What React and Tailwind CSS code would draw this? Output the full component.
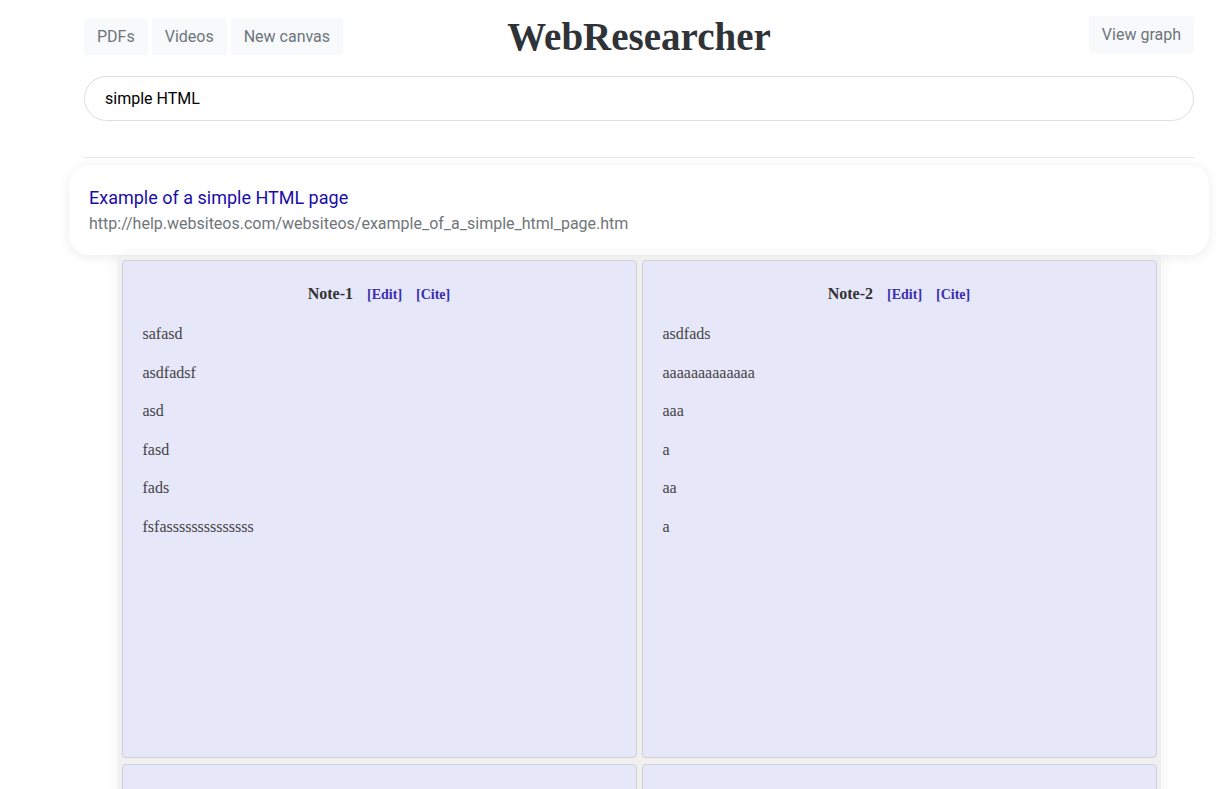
import React from 'react';

const notes = [
  { title: 'Note-1', lines: ['safasd', 'asdfadsf', 'asd', 'fasd', 'fads', 'fsfassssssssssssss'] },
  { title: 'Note-2', lines: ['asdfads', 'aaaaaaaaaaaaa', 'aaa', 'a', 'aa', 'a'] },
  { title: '', lines: [] },
  { title: '', lines: [] },
];

const TopButton = ({ children }) => (
  <button className="h-[37px] px-[13px] pt-[1px] bg-[#f8f9fa] text-[#6c757d] text-[16px] rounded-[3px]">
    {children}
  </button>
);

const NoteCard = ({ note }) => (
  <div className="h-[498px] bg-[#e7e7fa] border border-[#cfcfd6] rounded-[4px] pt-[23px] px-[20px] font-['Liberation_Serif',serif]">
    {note.title && (
      <div className="flex justify-center items-baseline gap-[14px] leading-[20px]">
        <span className="font-bold text-[16px] text-[#333]">{note.title}</span>
        <span className="font-bold text-[14px] text-[#3a2fae]">[Edit]</span>
        <span className="font-bold text-[14px] text-[#3a2fae]">[Cite]</span>
      </div>
    )}
    <div className="mt-[18px] flex flex-col gap-[16px]">
      {note.lines.map((line, i) => (
        <p key={i} className="text-[16px] leading-[22.5px] text-[#444]">{line}</p>
      ))}
    </div>
  </div>
);

const App = () => {
  return (
    <div className="min-h-screen bg-white font-['Roboto',sans-serif] overflow-hidden">
      <div className="ml-[84px] w-[1110px]">
        <div className="grid grid-cols-3 pt-[16px]">
          <div className="flex gap-[4px] mt-[2px]">
            <TopButton>PDFs</TopButton>
            <TopButton>Videos</TopButton>
            <TopButton>New canvas</TopButton>
          </div>
          <h1 className="justify-self-center mt-[1px] font-['Liberation_Serif',serif] font-bold text-[39px] leading-[40px] text-[#2f3337]">
            WebResearcher
          </h1>
          <div className="justify-self-end">
            <TopButton>View graph</TopButton>
          </div>
        </div>

        <div className="mt-[19px] h-[45px] rounded-full border border-[#dedede] flex items-center pl-[20px] text-[16px] text-black">
          simple HTML
        </div>

        <hr className="mt-[36px] border-0 border-t border-[#e6e6e6]" />

        <div className="mt-[7px] -mx-[15px] bg-white rounded-[20px] shadow-[0_2px_12px_rgba(0,0,0,0.08)] px-[20px] pt-[21px] pb-[19px]">
          <div className="text-[18px] leading-[24px] text-[#1a0dab]">Example of a simple HTML page</div>
          <div className="text-[16px] leading-[25px] pt-[1px] text-[#70757a]">
            http://help.websiteos.com/websiteos/example_of_a_simple_html_page.htm
          </div>
        </div>

        <div className="mt-[1px] mx-auto w-[1043px] bg-[#f0f0f0] p-[4px] grid grid-cols-2 gap-x-[5px] gap-y-[6px] shadow-[0_0_14px_rgba(0,0,0,0.06)]">
          {notes.map((n, i) => (
            <NoteCard key={i} note={n} />
          ))}
        </div>
      </div>
    </div>
  );
};

export default App;
